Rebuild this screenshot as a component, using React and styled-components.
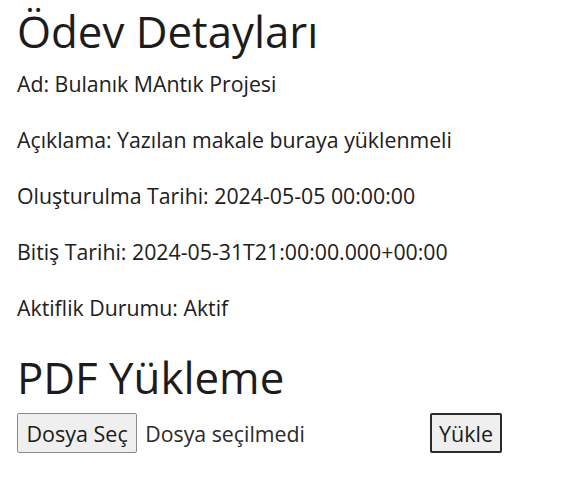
import React from 'react'
import styled, { createGlobalStyle } from 'styled-components'

const GlobalStyle = createGlobalStyle`
  body {
    margin: 0;
    background: #ffffff;
    color: #202020;
    font-family: "Open Sans", "Noto Sans", sans-serif;
  }
`

const Page = styled.div`
  padding: 5px 17px 0 17px;
`

const Heading = styled.h1`
  margin: ${(p) => (p.$spaced ? '29px 0 10px' : '0 0 13px')};
  font-size: 43.8px;
  font-weight: 400;
  line-height: 52px;
  color: #1c1c1c;
`

const Detail = styled.p`
  margin: 0 0 28px;
  font-size: 21.3px;
  line-height: 28px;

  &:last-of-type {
    margin-bottom: 0;
  }
`

const UploadRow = styled.div`
  display: flex;
  align-items: center;
  gap: 4px;
`

const FilePicker = styled.label`
  display: flex;
  align-items: center;
  gap: 8px;
  width: 409px;
  cursor: pointer;

  input {
    display: none;
  }
`

const Button = styled.span`
  display: inline-flex;
  align-items: center;
  height: 40px;
  box-sizing: border-box;
  padding: 0 ${(p) => (p.$focused ? '7px' : '8.5px')};
  background: #efefef;
  border: ${(p) => (p.$focused ? '2px solid #2b2b2b' : '1px solid #8a8a8a')};
  border-radius: 2px;
  font-family: inherit;
  font-size: 21.5px;
  color: #1a1a1a;
`

const FileName = styled.span`
  font-size: 21.3px;
  color: #2a2a2a;
`

export default function App() {
  return (
    <>
      <GlobalStyle />
      <Page>
        <Heading>Ödev Detayları</Heading>
        <Detail>Ad: Bulanık MAntık Projesi</Detail>
        <Detail>Açıklama: Yazılan makale buraya yüklenmeli</Detail>
        <Detail>Oluşturulma Tarihi: 2024-05-05 00:00:00</Detail>
        <Detail>Bitiş Tarihi: 2024-05-31T21:00:00.000+00:00</Detail>
        <Detail>Aktiflik Durumu: Aktif</Detail>
        <Heading $spaced>PDF Yükleme</Heading>
        <UploadRow>
          <FilePicker>
            <input type="file" accept="application/pdf" />
            <Button>Dosya Seç</Button>
            <FileName>Dosya seçilmedi</FileName>
          </FilePicker>
          <Button as="button" $focused>Yükle</Button>
        </UploadRow>
      </Page>
    </>
  )
}
